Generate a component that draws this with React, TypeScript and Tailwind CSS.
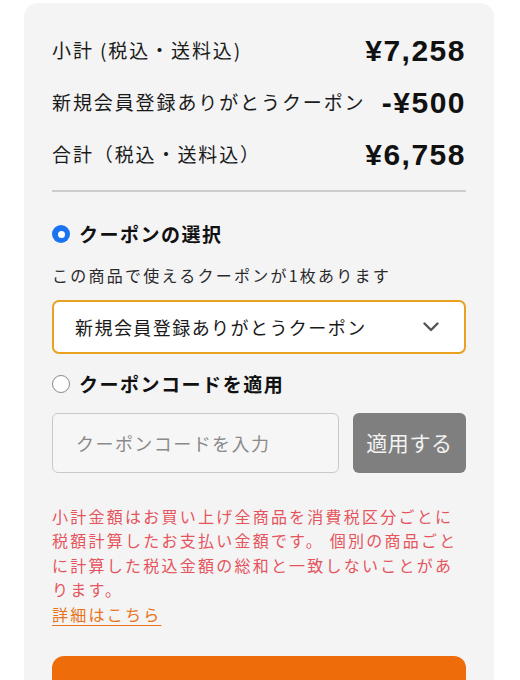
import { useState } from "react";

type Row = {
  label: string;
  price: string;
};

const rows: Row[] = [
  { label: "小計 (税込・送料込)", price: "¥7,258" },
  { label: "新規会員登録ありがとうクーポン", price: "-¥500" },
  { label: "合計（税込・送料込）", price: "¥6,758" },
];

const jp = { fontFamily: '"Noto Sans CJK JP", "Noto Sans", sans-serif' };
const num = { fontFamily: '"Liberation Sans", Arial, sans-serif' };

function Radio({ checked }: { checked: boolean }) {
  return checked ? (
    <span className="flex h-[18px] w-[18px] shrink-0 items-center justify-center rounded-full bg-[#1a73f0]">
      <span className="h-[7px] w-[7px] rounded-full bg-white" />
    </span>
  ) : (
    <span className="h-[18px] w-[18px] shrink-0 rounded-full border-[1.5px] border-[#8a8a8a] bg-white" />
  );
}

export default function App() {
  const [mode, setMode] = useState<"select" | "code">("select");
  const [code, setCode] = useState("");

  return (
    <div className="min-h-[680px] bg-white pt-[3px]" style={jp}>
      <div className="ml-[24px] w-[470px] rounded-[14px] bg-[#f4f4f5] px-[28px] pt-[21px] pb-[40px]">
        {rows.map((r) => (
          <div
            key={r.label}
            className="flex h-[52px] items-center justify-between whitespace-nowrap"
          >
            <span className="text-[19px] tracking-[0.1em] text-[#1a1a1a]">
              {r.label}
            </span>
            <span
              className="text-[30px] font-bold tracking-[0.05em] text-[#111]"
              style={num}
            >
              {r.price}
            </span>
          </div>
        ))}

        <div className="mt-[10px] h-[2px] bg-[#cdcdcd]" />

        <button
          className="mt-[28px] flex h-[28px] items-center gap-[9px]"
          onClick={() => setMode("select")}
        >
          <Radio checked={mode === "select"} />
          <span className="text-[19px] font-bold tracking-[0.08em] text-[#111]">
            クーポンの選択
          </span>
        </button>

        <p className="mt-[15px] text-[16px] leading-[24px] tracking-[0.14em] text-[#2a2a2a]">
          この商品で使えるクーポンが1枚あります
        </p>

        <div className="mt-[13px] flex h-[54px] items-center justify-between rounded-[7px] border-2 border-[#e9a122] bg-white pl-[21px] pr-[25px]">
          <span className="text-[18px] tracking-[0.08em] text-[#1a1a1a]">
            新規会員登録ありがとうクーポン
          </span>
          <svg width="16" height="10" viewBox="0 0 16 10" fill="none">
            <path
              d="M1.5 1.5 8 8l6.5-6.5"
              stroke="#555"
              strokeWidth="2.4"
              strokeLinecap="round"
              strokeLinejoin="round"
            />
          </svg>
        </div>

        <button
          className="mt-[16px] flex h-[28px] items-center gap-[9px]"
          onClick={() => setMode("code")}
        >
          <Radio checked={mode === "code"} />
          <span className="text-[19px] font-bold tracking-[0.08em] text-[#111]">
            クーポンコードを適用
          </span>
        </button>

        <div className="mt-[15px] flex gap-[14px]">
          <input
            value={code}
            onChange={(e) => setCode(e.target.value)}
            placeholder="クーポンコードを入力"
            className="h-[60px] w-[287px] rounded-[6px] border-[1.5px] border-[#c9c9c9] bg-[#f6f6f6] pl-[23px] text-[18px] tracking-[0.08em] text-[#222] outline-none placeholder:text-[#8a8a8a]"
          />
          <button className="h-[60px] flex-1 rounded-[6px] bg-[#7f7f7f] text-[21px] tracking-[0.03em] text-[#f2f2f2]">
            適用する
          </button>
        </div>

        <p className="mt-[31px] text-[16px] leading-[24.4px] tracking-[0.14em] text-[#e5545c]">
          小計金額はお買い上げ全商品を消費税区分ごとに税額計算したお支払い金額です。
          個別の商品ごとに計算した税込金額の総和と一致しないことがあります。
        </p>
        <a
          href="#"
          className="block text-[16px] leading-[24.4px] tracking-[0.14em] text-[#e8731a] underline underline-offset-[4px]"
        >
          詳細はこちら
        </a>

        <div className="mt-[30px] h-[56px] w-full rounded-[12px] bg-[#ee6d0a]" />
      </div>
    </div>
  );
}
